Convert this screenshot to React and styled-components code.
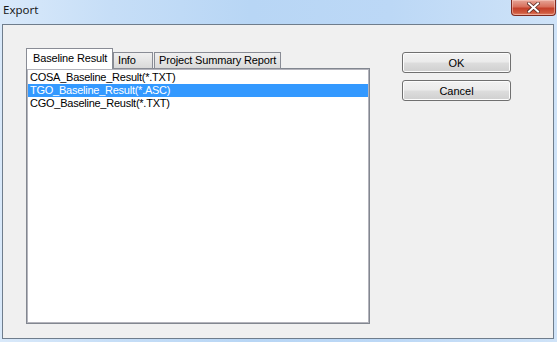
import React from "react";
import styled, { createGlobalStyle } from "styled-components";

const Global = createGlobalStyle`
  html, body { margin: 0; padding: 0; }
  body { background: #c4dcf5; font-family: "Liberation Sans", Arial, sans-serif; }
`;

const Frame = styled.div`
  width: 557px;
  height: 342px;
  box-sizing: border-box;
  padding: 0 3px 3px 2px;
  display: flex;
  flex-direction: column;
  background: linear-gradient(90deg, #d9e9fa 0%, #c6def7 20%, #b8d6f5 45%, #bcd8f6 70%, #cfe3f8 100%);
`;

const TitleBar = styled.div`
  height: 24px;
  flex: none;
  display: flex;
  align-items: flex-start;
  justify-content: space-between;
`;

const Title = styled.span`
  font-family: "Noto Sans", "Open Sans", sans-serif;
  font-size: 11.5px;
  color: #1a1a1a;
  margin: 2px 0 0 1px;
  line-height: 16px;
`;

const CloseButton = styled.div`
  width: 45px;
  height: 16px;
  margin-right: -2px;
  box-sizing: border-box;
  border: 1px solid #7d2a20;
  border-top: none;
  border-radius: 0 0 4px 4px;
  background: linear-gradient(180deg, #e6a597 0%, #d8705c 45%, #c4402a 55%, #cf5a3f 85%, #e58a70 100%);
  box-shadow: inset 0 0 0 1px rgba(255, 220, 210, 0.45);
  display: flex;
  align-items: center;
  justify-content: center;
`;

const Client = styled.div`
  flex: 1;
  box-sizing: border-box;
  border: 1px solid #6f7d8c;
  background: #f0f0f0;
  display: flex;
  align-items: flex-start;
  padding: 24px 0 0 23px;
`;

const TabArea = styled.div`
  width: 344px;
  display: flex;
  flex-direction: column;
`;

const TabRow = styled.div`
  display: flex;
  align-items: flex-end;
  height: 20px;
  position: relative;
  z-index: 1;
  margin-bottom: -1px;
`;

const Tab = styled.div`
  box-sizing: border-box;
  width: ${(p) => p.$w}px;
  height: ${(p) => (p.$active ? 21 : 17)}px;
  border: 1px solid #898c95;
  border-bottom: ${(p) => (p.$active ? "none" : "1px solid #898c95")};
  background: ${(p) =>
    p.$active ? "#ffffff" : "linear-gradient(180deg, #f0f0f0 0%, #e5e5e5 50%, #d9d9d9 100%)"};
  margin-right: ${(p) => (p.$active ? 0 : 1)}px;
  font-size: 11px;
  letter-spacing: -0.15px;
  color: #000;
  padding-left: ${(p) => (p.$active ? 6 : 4)}px;
  line-height: ${(p) => (p.$active ? 19 : 15)}px;
  white-space: nowrap;
`;

const ListBox = styled.div`
  box-sizing: border-box;
  height: 256px;
  border: 1px solid #828790;
  box-shadow: inset 0 0 0 1px #b4b4bc;
  background: #fff;
  padding: 2px 1px;
`;

const Item = styled.div`
  height: 13px;
  line-height: 13px;
  font-size: 11px;
  letter-spacing: -0.25px;
  padding-left: 2px;
  white-space: nowrap;
  color: ${(p) => (p.$selected ? "#fff" : "#000")};
  background: ${(p) => (p.$selected ? "#3399ff" : "transparent")};
`;

const ButtonColumn = styled.div`
  display: flex;
  flex-direction: column;
  gap: 7px;
  margin: 3px 0 0 32px;
`;

const Button = styled.div`
  box-sizing: border-box;
  width: 109px;
  height: 21px;
  border: 1px solid #707070;
  border-radius: 3px;
  background: linear-gradient(180deg, #f2f2f2 0%, #ebebeb 48%, #dddddd 52%, #cfcfcf 100%);
  box-shadow: inset 0 0 0 1px #fcfcfc;
  font-size: 11px;
  color: #000;
  display: flex;
  align-items: center;
  justify-content: center;
`;

const items = [
  "COSA_Baseline_Result(*.TXT)",
  "TGO_Baseline_Result(*.ASC)",
  "CGO_Baseline_Reuslt(*.TXT)",
];

export default function App() {
  return (
    <>
      <Global />
      <Frame>
        <TitleBar>
          <Title>Export</Title>
          <CloseButton>
            <svg width="13" height="11" viewBox="0 0 13 11">
              <path
                d="M2 1.5 L11 9.5 M11 1.5 L2 9.5"
                stroke="#5a2a22"
                strokeWidth="3.6"
                strokeLinecap="square"
              />
              <path
                d="M2 1.5 L11 9.5 M11 1.5 L2 9.5"
                stroke="#ffffff"
                strokeWidth="2"
                strokeLinecap="square"
              />
            </svg>
          </CloseButton>
        </TitleBar>
        <Client>
          <TabArea>
            <TabRow>
              <Tab $active $w={87}>Baseline Result</Tab>
              <Tab $w={40}>Info</Tab>
              <Tab $w={127}>Project Summary Report</Tab>
            </TabRow>
            <ListBox>
              {items.map((t, i) => (
                <Item key={t} $selected={i === 1}>
                  {t}
                </Item>
              ))}
            </ListBox>
          </TabArea>
          <ButtonColumn>
            <Button>OK</Button>
            <Button>Cancel</Button>
          </ButtonColumn>
        </Client>
      </Frame>
    </>
  );
}
